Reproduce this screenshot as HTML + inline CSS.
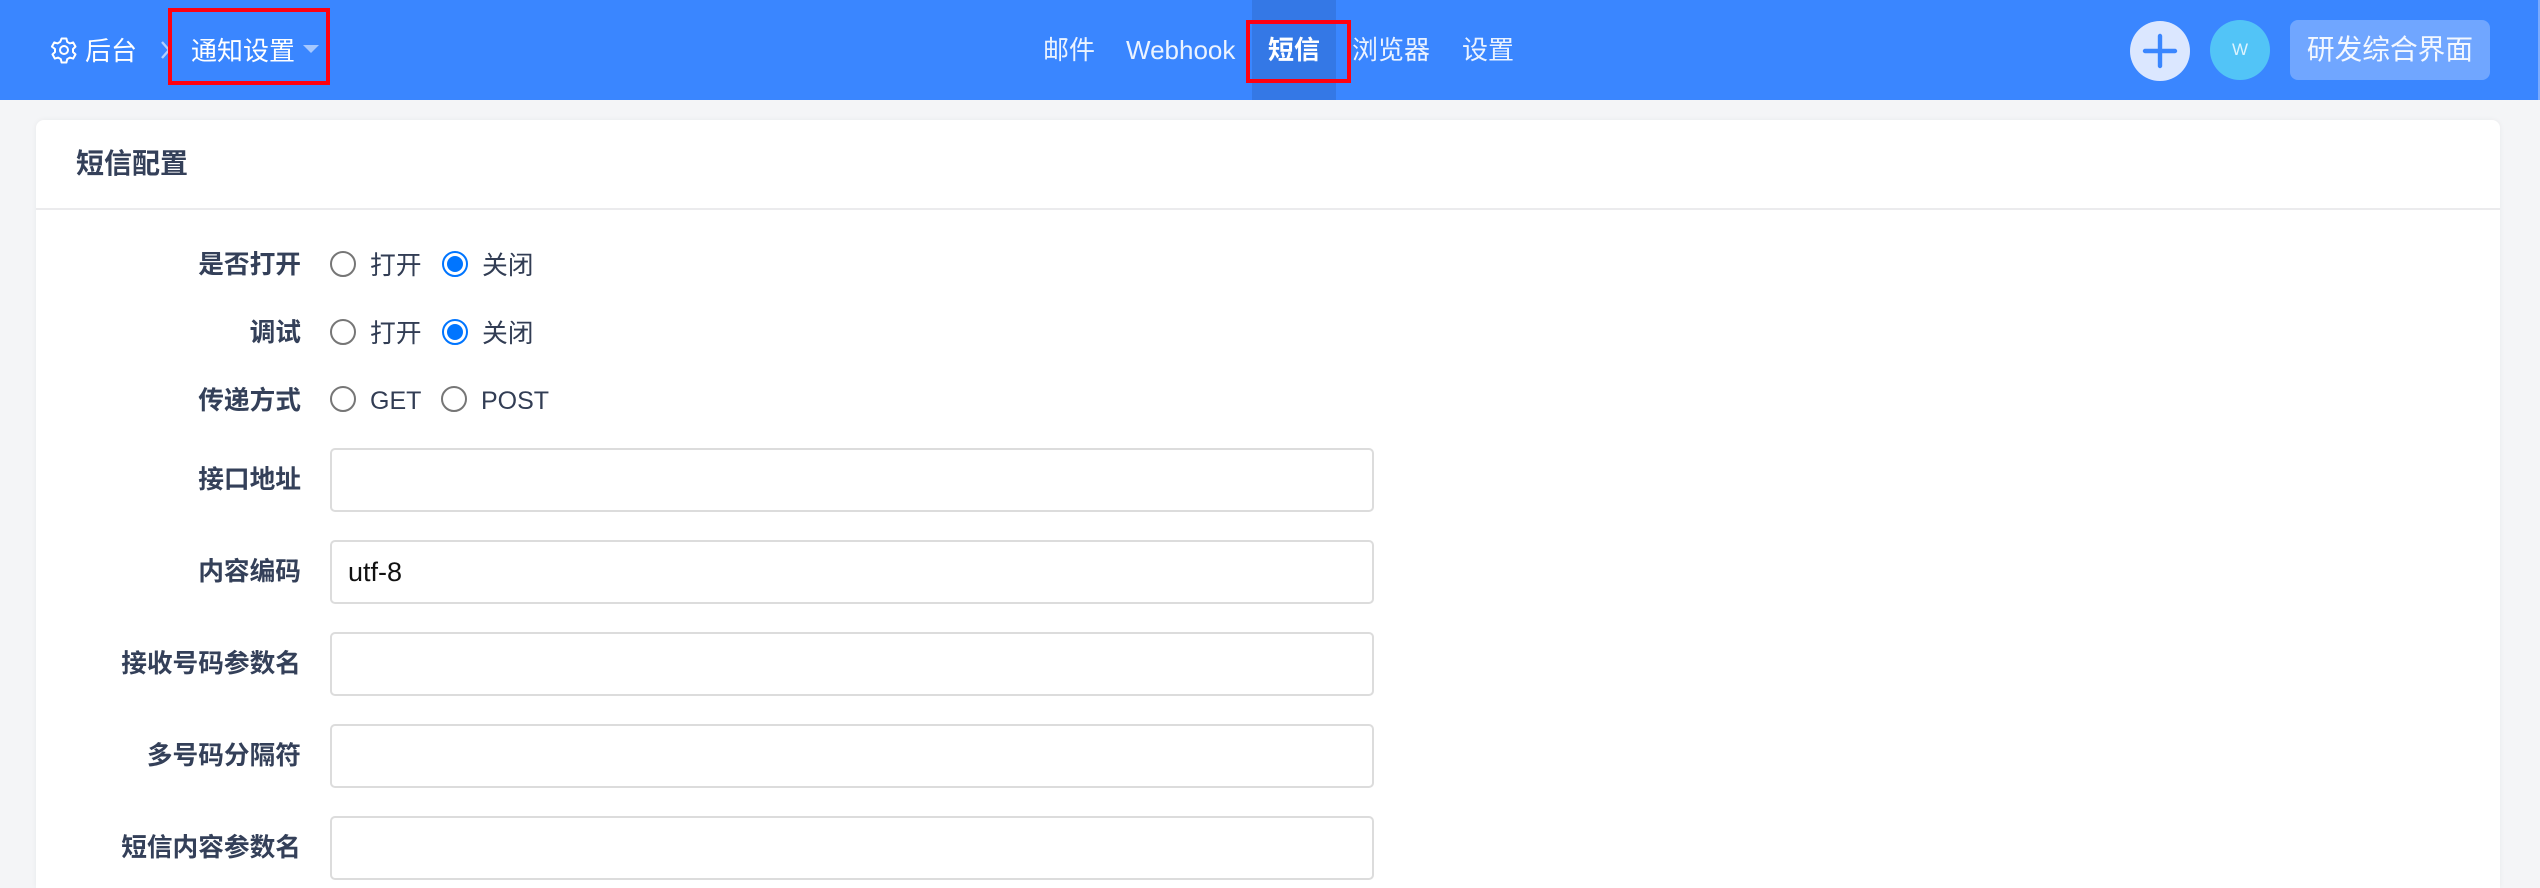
<!DOCTYPE html>
<html lang="zh-CN">
<head>
<meta charset="utf-8">
<title>短信配置</title>
<style>
*{box-sizing:border-box;margin:0;padding:0}
html,body{width:2540px;height:888px;overflow:hidden;background:#f4f5f7;font-family:"Liberation Sans","Noto Sans CJK SC",sans-serif}
#w{position:relative;width:2540px;height:888px;overflow:hidden}
.a{position:absolute;white-space:nowrap}
.t{font-size:26px;line-height:40px;height:40px}
.nav{color:rgba(255,255,255,.9)}
.lb{font-weight:700;font-size:25.700px;color:#344059;right:2239px;text-align:right}
.rt{color:#323d54;font-size:25.800px}
.r{position:absolute;width:26px;height:26px;border-radius:50%;border:2px solid #767676;background:#fff}
.r.on{border-color:#0075ff}
.r.on:after{content:"";position:absolute;left:3px;top:3px;width:16px;height:16px;border-radius:50%;background:#0075ff}
.in{position:absolute;left:330px;width:1044px;height:64px;border:2px solid #dcdcdc;border-radius:5px;background:#fff}
.box{position:absolute;border:4px solid #ff0010}
</style>
</head>
<body>
<div id="w">
<div class="a" style="left:0;top:0;width:2540px;height:100px;background:#3a86ff"></div>
<div class="a" style="left:2538px;top:0;width:2px;height:100px;background:#78aaff"></div>
<div class="a" style="left:1252px;top:0;width:84px;height:100px;background:#3478e6"></div>

<svg class="a" style="left:50px;top:36px" width="28" height="28" viewBox="0 0 28 28" fill="none" stroke="#fff" stroke-width="2" stroke-linejoin="round"><path d="M11.6 2.500h4.800l.8 3.400 2.600 1.500 3.300-1 2.400 4.200-2.500 2.400v3l2.500 2.400-2.400 4.200-3.300-1-2.600 1.500-.8 3.400h-4.800l-.8-3.400-2.600-1.500-3.300 1-2.400-4.200 2.500-2.400v-3L1.900 10.600l2.400-4.200 3.300 1 2.600-1.500z"/><circle cx="14" cy="14" r="4"/></svg>
<div class="a t" style="left:85px;top:31px;color:#fff">后台</div>
<svg class="a" style="left:160px;top:41px" width="12" height="18" viewBox="0 0 12 18" fill="none" stroke="rgba(255,255,255,.6)" stroke-width="2.400"><path d="M2 1l7 8-7 8"/></svg>
<div class="a t" style="left:191px;top:31px;color:#fff">通知设置</div>
<div class="a" style="left:303px;top:45px;width:0;height:0;border-left:8px solid transparent;border-right:8px solid transparent;border-top:8px solid rgba(255,255,255,.55)"></div>

<div class="a t nav" style="left:1043px;top:30px">邮件</div>
<div class="a t nav" style="left:1126px;top:30px">Webhook</div>
<div class="a t" style="left:1268px;top:30px;color:#fff;font-weight:700">短信</div>
<div class="a t nav" style="left:1352px;top:30px">浏览器</div>
<div class="a t nav" style="left:1462px;top:30px">设置</div>

<div class="a" style="left:2130px;top:21px;width:60px;height:60px;border-radius:50%;background:#dbe7ff"></div>
<svg class="a" style="left:2140px;top:31px" width="40" height="40" viewBox="0 0 40 40" stroke="#3a86ff" stroke-width="4.400" stroke-linecap="round"><path d="M5 20h30M20 5v30"/></svg>
<div class="a" style="left:2210px;top:20px;width:60px;height:60px;border-radius:50%;background:#52c4f7;color:rgba(255,255,255,.8);font-size:17px;line-height:60px;text-align:center">W</div>
<div class="a" style="left:2290px;top:20px;width:200px;height:60px;border-radius:8px;background:#70a6ff;color:rgba(255,255,255,.92);font-size:27.700px;line-height:60px;text-align:center">研发综合界面</div>

<div class="a" style="left:36px;top:120px;width:2464px;height:768px;background:#fff;border-radius:8px 8px 0 0;box-shadow:0 0 6px rgba(0,0,0,.05)"></div>
<div class="a" style="left:36px;top:208px;width:2464px;height:2px;background:#ebebed"></div>
<div class="a" style="left:76px;top:144px;font-size:28px;line-height:40px;font-weight:700;color:#344059">短信配置</div>

<div class="a t lb" style="top:245px">是否打开</div>
<div class="r" style="left:330px;top:251px"></div>
<div class="a t rt" style="left:370px;top:246px">打开</div>
<div class="r on" style="left:442px;top:251px"></div>
<div class="a t rt" style="left:482px;top:246px">关闭</div>

<div class="a t lb" style="top:313px">调试</div>
<div class="r" style="left:330px;top:319px"></div>
<div class="a t rt" style="left:370px;top:314px">打开</div>
<div class="r on" style="left:442px;top:319px"></div>
<div class="a t rt" style="left:482px;top:314px">关闭</div>

<div class="a t lb" style="top:381px">传递方式</div>
<div class="r" style="left:330px;top:386px"></div>
<div class="a t rt" style="left:370px;top:381px;font-size:25px">GET</div>
<div class="r" style="left:441px;top:386px"></div>
<div class="a t rt" style="left:481px;top:381px;font-size:25px">POST</div>

<div class="a t lb" style="top:460px">接口地址</div>
<div class="in" style="top:448px"></div>

<div class="a t lb" style="top:552px">内容编码</div>
<div class="in" style="top:540px"></div>
<div class="a t" style="left:348px;top:552px;color:#111;font-size:27px">utf-8</div>

<div class="a t lb" style="top:644px">接收号码参数名</div>
<div class="in" style="top:632px"></div>

<div class="a t lb" style="top:736px">多号码分隔符</div>
<div class="in" style="top:724px"></div>

<div class="a t lb" style="top:828px">短信内容参数名</div>
<div class="in" style="top:816px"></div>

<div class="box" style="left:168px;top:8px;width:162px;height:77px"></div>
<div class="box" style="left:1246px;top:20px;width:105px;height:63px"></div>
</div>
</body>
</html>
